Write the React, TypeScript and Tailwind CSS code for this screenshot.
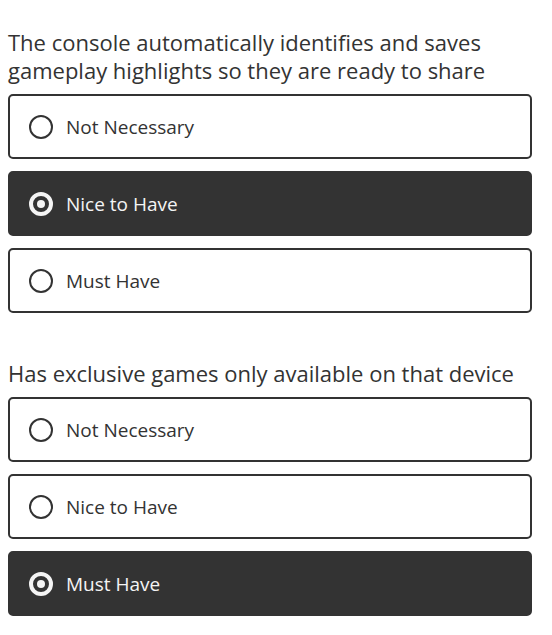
import React from "react";

type Q = { title: string; selected: number };

const options = ["Not Necessary", "Nice to Have", "Must Have"];

const questions: Q[] = [
  { title: "The console automatically identifies and saves gameplay highlights so they are ready to share", selected: 1 },
  { title: "Has exclusive games only available on that device", selected: 2 },
];

function Radio({ checked }: { checked: boolean }) {
  if (checked) {
    return (
      <span className="flex h-[24px] w-[24px] shrink-0 items-center justify-center rounded-full border-[4px] border-[#f4f4f4]">
        <span className="h-[8px] w-[8px] rounded-full bg-[#f4f4f4]" />
      </span>
    );
  }
  return <span className="h-[24px] w-[24px] shrink-0 rounded-full border-2 border-[#333333]" />;
}

export default function App() {
  return (
    <div className="min-h-[635px] bg-white pl-[8px] pr-[20px] pt-[28px]" style={{ fontFamily: '"Open Sans", sans-serif' }}>
      {questions.map((q, qi) => (
        <div key={qi} className={qi > 0 ? "mt-[46px]" : ""}>
          <h2 className="text-[22px] leading-[28px] text-[#333333] font-normal">{q.title}</h2>
          <div className="mt-[10px] flex flex-col gap-[12px]">
            {options.map((o, oi) => {
              const sel = oi === q.selected;
              return (
                <div
                  key={oi}
                  className={
                    sel
                      ? "flex h-[65px] items-center gap-[13px] rounded-[5px] border-2 border-[#333333] bg-[#333333] pl-[19px] text-[#f4f4f4]"
                      : "flex h-[65px] items-center gap-[13px] rounded-[5px] border-2 border-[#333333] bg-white pl-[19px] text-[#333333]"
                  }
                >
                  <Radio checked={sel} />
                  <span className="text-[19px] leading-[26px]">{o}</span>
                </div>
              );
            })}
          </div>
        </div>
      ))}
    </div>
  );
}
